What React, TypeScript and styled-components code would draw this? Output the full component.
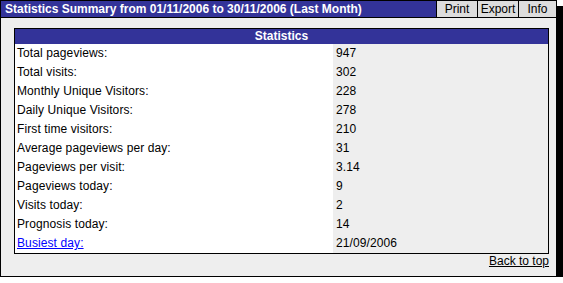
import React, { FunctionComponent } from "react";
import styled, { createGlobalStyle } from "styled-components";

const BLUE = "#333399";
const CLOUD = "#eeeeee";
const BUTTON = "#dddddd";

const GlobalStyle = createGlobalStyle`
  html, body {
    margin: 0;
    padding: 0;
    background: #ffffff;
  }
  body {
    font-family: "Liberation Sans", Arial, sans-serif;
    font-size: 12px;
    color: #000000;
  }
`;

const Frame = styled.div`
  box-sizing: border-box;
  width: 557px;
  height: 277px;
  border: 1px solid #000;
  background: ${CLOUD};
  box-shadow: 6px 6px 0 #000;
  display: flex;
  flex-direction: column;
`;

const TitleBar = styled.div`
  display: flex;
  height: 16px;
  background: ${BLUE};
  border-bottom: 1px solid #000;
`;

const TitleText = styled.div`
  flex: 1;
  color: #fff;
  font-weight: 700;
  line-height: 16px;
  padding-left: 4px;
  white-space: nowrap;
`;

const ToolButton = styled.div<{ $width: number }>`
  box-sizing: border-box;
  width: ${(p) => p.$width}px;
  background: ${BUTTON};
  border-left: 1px solid #000;
  text-align: center;
  line-height: 16px;
`;

const Body = styled.div`
  padding: 10px 7px 0 13px;
  display: flex;
  flex-direction: column;
`;

const StatsTable = styled.div`
  border: 1px solid #000;
  display: grid;
  grid-template-columns: 318px 1fr;
  grid-template-rows: 15px;
  grid-auto-rows: 19px;
`;

const TableHeader = styled.div`
  grid-column: 1 / -1;
  background: ${BLUE};
  color: #fff;
  font-weight: 700;
  text-align: center;
  line-height: 15px;
`;

const LabelCell = styled.div`
  background: #fff;
  padding-left: 2px;
  line-height: 19px;
  white-space: nowrap;
  letter-spacing: 0.1px;
`;

const ValueCell = styled.div`
  background: ${CLOUD};
  padding-left: 3px;
  line-height: 19px;
  letter-spacing: 0.1px;
`;

const LabelLink = styled.a`
  color: #0000ff;
  text-decoration: underline;
`;

const Footer = styled.div`
  display: flex;
  justify-content: flex-end;
  line-height: 15px;
`;

const BackLink = styled.a`
  color: #000;
  text-decoration: underline;
`;

interface Stat {
  label: string;
  value: string;
  link?: boolean;
}

const stats: Stat[] = [
  { label: "Total pageviews:", value: "947" },
  { label: "Total visits:", value: "302" },
  { label: "Monthly Unique Visitors:", value: "228" },
  { label: "Daily Unique Visitors:", value: "278" },
  { label: "First time visitors:", value: "210" },
  { label: "Average pageviews per day:", value: "31" },
  { label: "Pageviews per visit:", value: "3.14" },
  { label: "Pageviews today:", value: "9" },
  { label: "Visits today:", value: "2" },
  { label: "Prognosis today:", value: "14" },
  { label: "Busiest day:", value: "21/09/2006", link: true },
];

const StatRow: FunctionComponent<{ stat: Stat }> = ({ stat }) => (
  <>
    <LabelCell>
      {stat.link ? <LabelLink href="#">{stat.label}</LabelLink> : stat.label}
    </LabelCell>
    <ValueCell>{stat.value}</ValueCell>
  </>
);

const App: FunctionComponent = () => {
  return (
    <>
      <GlobalStyle />
      <Frame>
        <TitleBar>
          <TitleText>
            Statistics Summary from 01/11/2006 to 30/11/2006 (Last Month)
          </TitleText>
          <ToolButton $width={41}>Print</ToolButton>
          <ToolButton $width={41}>Export</ToolButton>
          <ToolButton $width={38}>Info</ToolButton>
        </TitleBar>
        <Body>
          <StatsTable>
            <TableHeader>Statistics</TableHeader>
            {stats.map((stat) => (
              <StatRow key={stat.label} stat={stat} />
            ))}
          </StatsTable>
          <Footer>
            <BackLink href="#">Back to top</BackLink>
          </Footer>
        </Body>
      </Frame>
    </>
  );
};

export default App;
